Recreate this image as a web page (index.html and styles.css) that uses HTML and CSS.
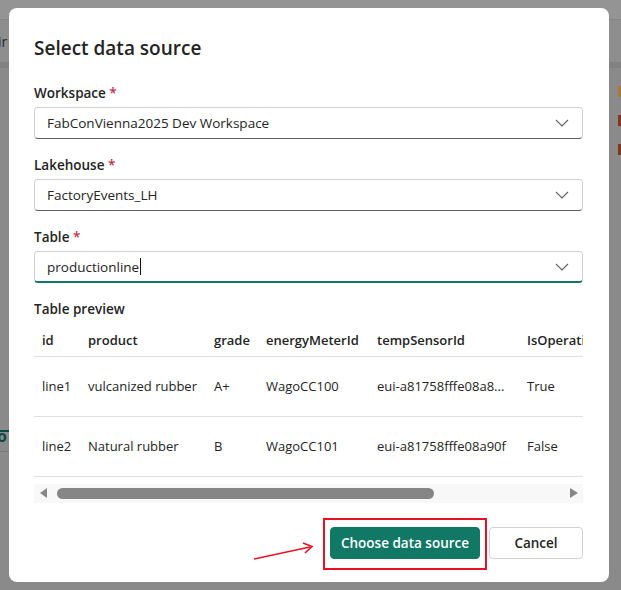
FILE: index.html
```html
<!DOCTYPE html>
<html lang="en">
<head>
<meta charset="utf-8">
<title>Select data source</title>
<link rel="stylesheet" href="styles.css">
</head>
<body>
<div class="page">
  <div class="topbar"></div>
  <div class="toolbar"><span class="tb-text">ir</span></div>
  <div class="sep"></div>
  <div class="main">
    <div class="side-left">
      <div class="teal-line"></div>
      <div class="teal-o">o</div>
      <div class="gray-line"></div>
    </div>
    <div class="side-right">
      <span class="sq sq1"></span>
      <span class="sq sq2"></span>
      <span class="sq sq3"></span>
    </div>
  </div>
</div>

<div class="dialog">
  <h1 class="title">Select data source</h1>

  <div class="field">
    <label class="label">Workspace <span class="req">*</span></label>
    <div class="select">
      <span class="value">FabConVienna2025 Dev Workspace</span>
      <svg class="chev" width="14" height="8" viewBox="0 0 14 8"><path d="M1 1 L7 7 L13 1" fill="none" stroke="#616161" stroke-width="1.1"/></svg>
    </div>
  </div>

  <div class="field">
    <label class="label">Lakehouse <span class="req">*</span></label>
    <div class="select">
      <span class="value">FactoryEvents_LH</span>
      <svg class="chev" width="14" height="8" viewBox="0 0 14 8"><path d="M1 1 L7 7 L13 1" fill="none" stroke="#616161" stroke-width="1.1"/></svg>
    </div>
  </div>

  <div class="field">
    <label class="label">Table <span class="req">*</span></label>
    <div class="select active">
      <span class="value">productionline<span class="caret"></span></span>
      <svg class="chev" width="14" height="8" viewBox="0 0 14 8"><path d="M1 1 L7 7 L13 1" fill="none" stroke="#616161" stroke-width="1.1"/></svg>
    </div>
  </div>

  <div class="preview">
    <div class="label">Table preview</div>
    <div class="table-wrap">
      <table class="grid">
        <thead>
          <tr><th class="c1">id</th><th class="c2">product</th><th class="c3">grade</th><th class="c4">energyMeterId</th><th class="c5">tempSensorId</th><th class="c6">IsOperational</th></tr>
        </thead>
        <tbody>
          <tr><td>line1</td><td>vulcanized rubber</td><td>A+</td><td>WagoCC100</td><td>eui-a81758fffe08a8...</td><td>True</td></tr>
          <tr><td>line2</td><td>Natural rubber</td><td>B</td><td>WagoCC101</td><td>eui-a81758fffe08a90f</td><td>False</td></tr>
        </tbody>
      </table>
    </div>
    <div class="hscroll">
      <span class="arrow-l"></span>
      <div class="track"><div class="thumb"></div></div>
      <span class="arrow-r"></span>
    </div>
  </div>

  <div class="actions">
    <div class="highlight">
      <button class="btn primary">Choose data source</button>
    </div>
    <button class="btn secondary">Cancel</button>
    <svg class="annot-arrow" width="70" height="22" viewBox="0 0 70 22">
      <path d="M2 18 L58 6" stroke="#e81123" stroke-width="1.6" fill="none"/>
      <path d="M51 2 L60 5.5 L53 12" stroke="#e81123" stroke-width="1.6" fill="none"/>
    </svg>
  </div>
</div>
</body>
</html>
```

FILE: styles.css
```css
* { box-sizing: border-box; }

html, body {
  margin: 0;
  padding: 0;
  width: 621px;
  height: 590px;
  overflow: hidden;
}

body {
  font-family: "Open Sans", "Noto Sans", "Liberation Sans", sans-serif;
  color: #242424;
  background: #8a8a8a;
}

.page {
  display: flex;
  flex-direction: column;
  height: 590px;
}

.topbar {
  height: 20px;
  background: #949494;
  border-bottom: 1px solid #858585;
}

.toolbar {
  height: 42px;
  background: #8e8e8e;
  display: flex;
  align-items: center;
}

.tb-text {
  font-size: 14px;
  color: #2a2a2a;
  margin-left: -2px;
}

.sep {
  height: 6px;
  background: #828282;
}

.main {
  flex: 1;
  display: flex;
  justify-content: space-between;
  background: #8a8a8a;
}

.side-left {
  width: 12px;
  padding-top: 362px;
}

.teal-line {
  height: 2px;
  width: 10px;
  background: #0d4a41;
}

.teal-o {
  font-size: 16px;
  font-weight: 700;
  color: #0d4a41;
  line-height: 18px;
  margin-top: -5px;
  margin-left: -3px;
}

.gray-line {
  height: 1px;
  background: #7c7c7c;
  margin-top: 6px;
}

.side-right {
  width: 12px;
  padding-top: 18px;
  display: flex;
  flex-direction: column;
  align-items: flex-end;
  gap: 18px;
}

.sq {
  display: block;
  width: 3px;
  height: 11px;
}

.sq1 { background: #a8773c; }
.sq2 { background: #7a3a1a; }
.sq3 { background: #7a3a1a; }

/* Dialog */
.dialog {
  position: absolute;
  left: 9px;
  top: 8px;
  width: 600px;
  height: 574px;
  background: #ffffff;
  border-radius: 8px;
  padding: 26px 26px 0 25px;
  display: flex;
  flex-direction: column;
}

.title {
  margin: 0;
  font-size: 19px;
  line-height: 28px;
  font-weight: 600;
  color: #242424;
}

.field {
  display: flex;
  flex-direction: column;
  gap: 4px;
  margin-top: 16px;
}

.field:first-of-type { margin-top: 21px; }

.label {
  font-size: 13.5px;
  line-height: 20px;
  font-weight: 600;
  color: #242424;
}

.req { color: #c4314b; }

.select {
  height: 32px;
  border: 1px solid #d1d1d1;
  border-bottom-color: #616161;
  border-radius: 4px;
  display: flex;
  align-items: center;
  justify-content: space-between;
  padding: 0 13px 0 12px;
}

.select.active {
  border-bottom: 2px solid #117865;
}

.value {
  font-size: 13.5px;
  color: #242424;
  display: flex;
  align-items: center;
}

.caret {
  display: inline-block;
  width: 1px;
  height: 17px;
  background: #111;
  margin-left: 1px;
}

.chev { display: block; }

.preview {
  margin-top: 16px;
  display: flex;
  flex-direction: column;
}

.table-wrap {
  margin-top: 5px;
  width: 549px;
  overflow: hidden;
}

.grid {
  border-collapse: collapse;
  table-layout: fixed;
  width: 640px;
  font-size: 13px;
}

.grid th, .grid td {
  text-align: left;
  padding: 0 0 0 8px;
  white-space: nowrap;
  overflow: hidden;
  border-bottom: 1px solid #e0e0e0;
  color: #242424;
}

.grid th {
  height: 32px;
  font-weight: 600;
}

.grid td {
  height: 60px;
  font-weight: 400;
}

.c1 { width: 46px; }
.c2 { width: 126px; }
.c3 { width: 52px; }
.c4 { width: 111px; }
.c5 { width: 150px; }
.c6 { width: 155px; }

.hscroll {
  margin-top: 7px;
  height: 19px;
  background: #f8f8f8;
  display: flex;
  align-items: center;
  padding: 0 5px 0 6px;
}

.arrow-l {
  width: 0;
  height: 0;
  border-top: 5px solid transparent;
  border-bottom: 5px solid transparent;
  border-right: 7px solid #868686;
}

.arrow-r {
  width: 0;
  height: 0;
  border-top: 5px solid transparent;
  border-bottom: 5px solid transparent;
  border-left: 8px solid #868686;
}

.track {
  flex: 1;
  padding: 0 10px;
}

.thumb {
  width: 377px;
  height: 11px;
  border-radius: 6px;
  background: #868686;
}

.actions {
  position: relative;
  margin-top: 24px;
  display: flex;
  justify-content: flex-end;
  gap: 9px;
}

.highlight {
  position: relative;
  display: flex;
}

.highlight::after {
  content: "";
  position: absolute;
  left: -7px;
  right: -7px;
  top: -9px;
  bottom: -11px;
  border: 2px solid #e81123;
  pointer-events: none;
}

.btn {
  height: 32px;
  border-radius: 4px;
  font-family: inherit;
  font-size: 13.5px;
  font-weight: 600;
  padding: 0;
  white-space: nowrap;
  cursor: pointer;
}

.primary {
  width: 150px;
  background: #117865;
  border: 1px solid #117865;
  color: #ffffff;
}

.secondary {
  width: 94px;
  background: #ffffff;
  border: 1px solid #d1d1d1;
  color: #242424;
}

.annot-arrow {
  position: absolute;
  left: 218px;
  top: 14px;
}
```
